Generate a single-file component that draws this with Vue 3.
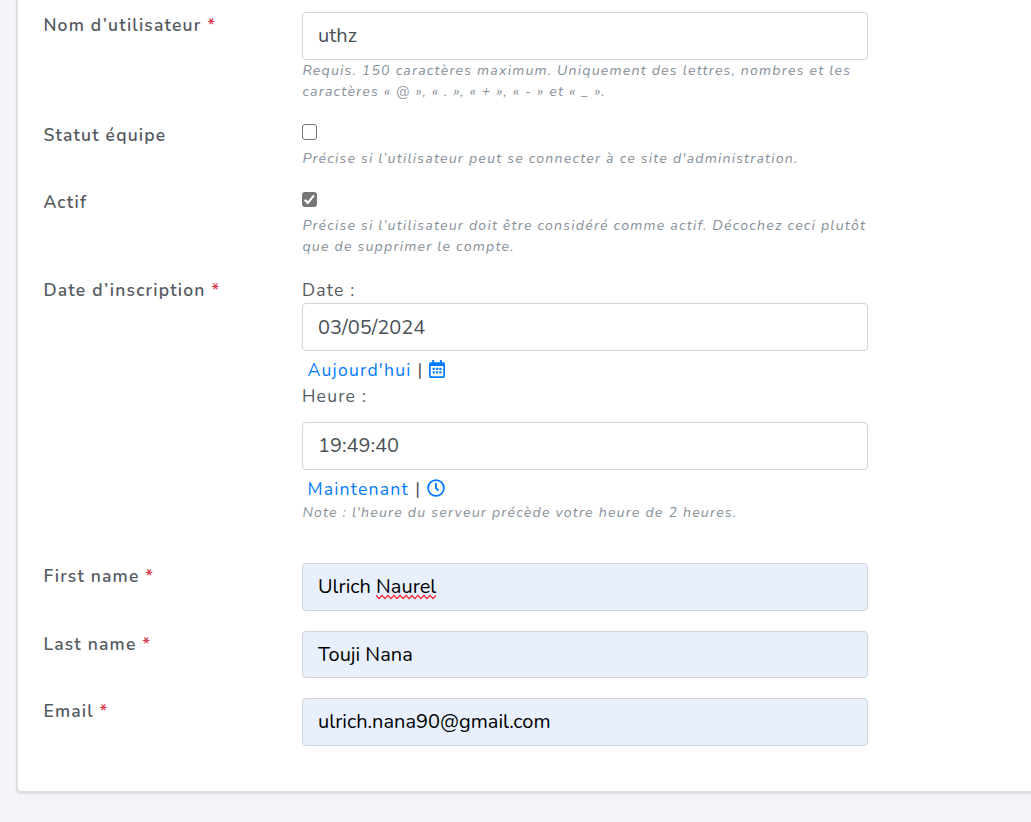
<script setup>
const calendarDots = [3.7, 7, 10.3].flatMap((x) => [7.8, 11.2].map((y) => ({ x, y })))
</script>

<template>
  <main class="page">
    <section class="card">
      <div class="row r1">
        <div class="label">Nom d’utilisateur <b>*</b></div>
        <div class="field">
          <div class="input">uthz</div>
          <div class="help">Requis. 150 caractères maximum. Uniquement des lettres, nombres et les<br>caractères « @ », « . », « + », « - » et « _ ».</div>
        </div>
      </div>
      <div class="row r2">
        <div class="label">Statut équipe</div>
        <div class="field">
          <div class="check"><span class="box"></span></div>
          <div class="help">Précise si l’utilisateur peut se connecter à ce site d'administration.</div>
        </div>
      </div>
      <div class="row r3">
        <div class="label">Actif</div>
        <div class="field">
          <div class="check second"><span class="box checked"><svg viewBox="0 0 15 15"><path d="M2.7 7.8 5.8 10.9 12 3.4" fill="none" stroke="#fff" stroke-width="2.2" /></svg></span></div>
          <div class="help">Précise si l’utilisateur doit être considéré comme actif. Décochez ceci plutôt<br>que de supprimer le compte.</div>
        </div>
      </div>
      <div class="row r4">
        <div class="label">Date d’inscription <b>*</b></div>
        <div class="field">
          <div class="sub">Date :</div>
          <div class="input low">03/05/2024</div>
          <div class="links">
            <a>Aujourd'hui</a><i>|</i>
            <svg class="cal" viewBox="0 0 16 18"><path fill="#007bff" fill-rule="evenodd" d="M3.2 0h1.9v2.2h5.8V0h1.9v2.2h1.5A1.7 1.7 0 0 1 16 3.9v12.4a1.7 1.7 0 0 1-1.7 1.7H1.7A1.7 1.7 0 0 1 0 16.3V3.9a1.7 1.7 0 0 1 1.7-1.7h1.5zM1.7 5.9v10.4h12.6V5.9z" /><rect v-for="(d, n) in calendarDots" :key="n" :x="d.x" :y="d.y" width="2.2" height="2.2" rx=".4" fill="#007bff" /></svg>
          </div>
          <div class="sub hour">Heure :</div>
          <div class="input">19:49:40</div>
          <div class="links">
            <a>Maintenant</a><i class="wide">|</i>
            <svg class="clock" viewBox="0 0 18 18" fill="none" stroke="#007bff"><circle cx="9" cy="9" r="7.9" stroke-width="1.8" /><path d="M8.9 4v5.2l2.6 2.3" stroke-width="1.8" /></svg>
          </div>
          <div class="help">Note : l'heure du serveur précède votre heure de 2 heures.</div>
        </div>
      </div>
      <div class="row r5">
        <div class="label">First name <b>*</b></div>
        <div class="field"><div class="input filled">Ulrich <u>Naurel<svg viewBox="0 0 60 6"><path d="M0 1.3 3 4.6 6 1.3 9 4.6 12 1.3 15 4.6 18 1.3 21 4.6 24 1.3 27 4.6 30 1.3 33 4.6 36 1.3 39 4.6 42 1.3 45 4.6 48 1.3 51 4.6 54 1.3 57 4.6 60 1.3" fill="none" stroke="#f5141e" stroke-width="1.2" stroke-linejoin="round" /></svg></u></div></div>
      </div>
      <div class="row r6">
        <div class="label">Last name <b>*</b></div>
        <div class="field"><div class="input filled short">Touji Nana</div></div>
      </div>
      <div class="row r7">
        <div class="label">Email <b>*</b></div>
        <div class="field"><div class="input filled">ulrich.nana90@gmail.com</div></div>
      </div>
    </section>
  </main>
</template>

<style>
html, body { margin: 0; background: #f4f5fa; overflow: hidden; }
</style>

<style scoped>
* { box-sizing: border-box; }
.page { height: 822px; padding-left: 16px; overflow: hidden; background: #f4f5fa; font-family: Nunito, Lato, sans-serif; color: #495057; }
.card { width: 1040px; height: 793px; padding: 12px 0 0 25px; background: #fff; border: 2px solid #dedfe1; border-top: 0; border-radius: 0 0 5px 5px; box-shadow: 0 1px 2px rgba(0, 0, 0, .1); }
.row { display: grid; grid-template-columns: 259px 566px; }
.r1 { height: 110px; }
.r2 { height: 67px; }
.r3 { height: 88px; }
.r4 { height: 286px; }
.r5 { height: 68px; }
.r6 { height: 67px; }
.label { padding-left: .4px; font-size: 17.5px; line-height: 26px; letter-spacing: 1.18px; white-space: nowrap; font-weight: 600; color: #555a5f; }
.label b { color: #dc3545; font-weight: 600; }
.input { height: 48px; padding-left: 15px; border: 1px solid #ced4da; border-radius: 4px; line-height: 46px; font-size: 20px; white-space: nowrap; background: #fff; }
.input.low { line-height: 47px; }
.input.filled { background: #e8f0fe; color: #000; }
.input.short { height: 47px; line-height: 45px; }
.help { padding-left: .4px; font-size: 14.1px; line-height: 21px; font-style: italic; color: #869099; letter-spacing: 1.21px; white-space: nowrap; }
.check { height: 26px; padding-top: 2px; }
.check.second { padding-top: 3px; }
.box { display: block; width: 15px; height: 15.5px; border: 1px solid #767676; border-radius: 3px; background: #fff; }
.checked { height: 15px; background: #767676; border: 0; }
.box svg { display: block; width: 15px; height: 15px; }
.sub { height: 26px; line-height: 26px; font-size: 17.6px; letter-spacing: 1.2px; white-space: nowrap; color: #555a5f; }
.sub.hour { height: 39px; }
.links { display: flex; align-items: center; height: 32px; padding: 6px 0 0 5.5px; font-size: 17.6px; letter-spacing: 1.2px; line-height: 26px; white-space: nowrap; }
.links a { color: #007bff; }
.links i { font-style: normal; margin: 0 5px 0 5.9px; }
.links i.wide { margin-left: 6.3px; }
.links svg { margin: 0 0 2px .6px; }
.cal { width: 16px; height: 18px; }
.clock { width: 18px; height: 18px; }
u { position: relative; text-decoration: none; }
u svg { position: absolute; left: 0; bottom: 0; width: 60px; height: 6px; }
</style>
